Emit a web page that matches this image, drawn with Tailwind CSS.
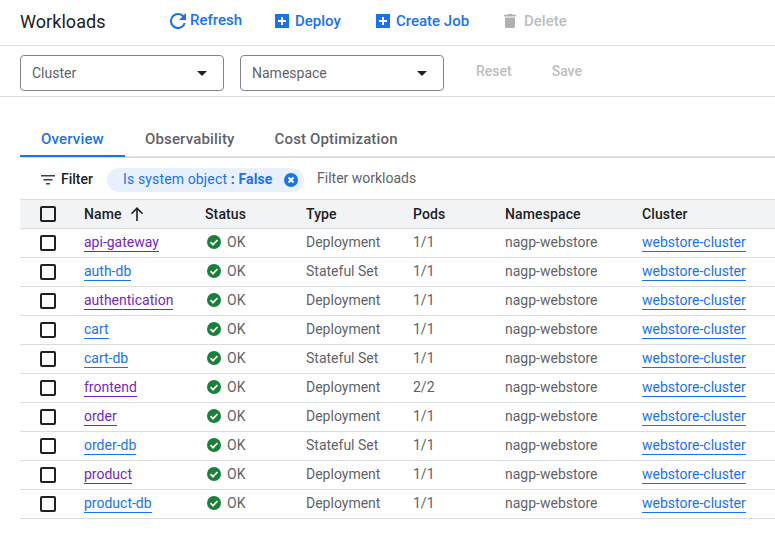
<!DOCTYPE html>
<html lang="en">
<head>
  <meta charset="UTF-8" />
  <title>Workloads</title>
  <script src="https://cdn.jsdelivr.net/npm/@tailwindcss/browser@4"></script>
</head>
<body class="bg-white h-[551px] overflow-hidden font-['Roboto',sans-serif] text-[14px] text-[#202124]">
  <!-- top bar -->
  <header class="h-[46px] flex items-center pl-5 border-b border-[#dadce0]">
    <h1 class="text-[18px] tracking-[0.05px] w-[150px] -mt-[3px]">Workloads</h1>
    <button class="flex items-center gap-1 text-[#1a73e8] font-medium text-[15px] w-[105px] -mt-[5px]">
      <svg class="w-4 h-4 mt-[1px]" viewBox="4 4 16 16" fill="#1a73e8"><path d="M17.650 6.350A7.960 7.960 0 0 0 12 4a8 8 0 1 0 7.730 10h-2.080A6 6 0 1 1 12 6c1.660 0 3.140.69 4.220 1.780L13 11h7V4l-2.350 2.350z"/></svg>
      Refresh
    </button>
    <button class="flex items-center gap-[6px] text-[#1a73e8] font-medium text-[15px] w-[101px] -mt-[3px]">
      <svg class="w-[14px] h-[14px]" viewBox="0 0 14 14"><path fill="#1a73e8" d="M0 0h14v14H0z"/><path fill="#fff" d="M6 3h2v3h3v2H8v3H6V8H3V6h3z"/></svg>
      Deploy
    </button>
    <button class="flex items-center gap-[6px] text-[#1a73e8] font-medium text-[15px] w-[128px] -mt-[3px]">
      <svg class="w-[14px] h-[14px]" viewBox="0 0 14 14"><path fill="#1a73e8" d="M0 0h14v14H0z"/><path fill="#fff" d="M6 3h2v3h3v2H8v3H6V8H3V6h3z"/></svg>
      Create Job
    </button>
    <button class="flex items-center gap-2 text-[#bdbdbd] font-medium text-[15px] -mt-[3px]">
      <svg class="w-3 h-[14px]" viewBox="0 0 12 14" fill="#b0b0b0"><path d="M1 3.500h10V12.500A1.500 1.500 0 0 1 9.500 14h-7A1.500 1.500 0 0 1 1 12.500zM4 0h4l.7.8H12v1.700H0V.8h3.300z"/></svg>
      Delete
    </button>
  </header>

  <!-- filters -->
  <div class="h-[51px] flex items-center pl-5 pt-[4px] border-b border-[#dadce0]">
    <div class="w-[204px] h-[36px] flex items-center justify-between px-[11px] border border-[#80868b] rounded text-[#5f6368]">
      Cluster
      <span class="w-0 h-0 mr-[5px] border-x-[5px] border-x-transparent border-t-[5px] border-t-[#202124]"></span>
    </div>
    <div class="ml-4 w-[204px] h-[36px] flex items-center justify-between px-[11px] border border-[#80868b] rounded text-[#5f6368]">
      Namespace
      <span class="w-0 h-0 mr-[5px] border-x-[5px] border-x-transparent border-t-[5px] border-t-[#202124]"></span>
    </div>
    <span class="ml-[32px] -mt-[3px] text-[#bdbdbd] font-medium">Reset</span>
    <span class="ml-10 -mt-[3px] text-[#bdbdbd] font-medium">Save</span>
  </div>

  <!-- tabs -->
  <nav class="mt-[28px] ml-5 h-[33px] flex border-b-2 border-[#dadce0] font-medium text-[#5f6368] text-[15px] tracking-[0.15px]">
    <a class="w-[105px] h-[32px] flex justify-center pt-[3px] text-[#1a73e8] border-b-2 border-[#1a73e8]">Overview</a>
    <a class="ml-5 pt-[3px]">Observability</a>
    <a class="ml-10 pt-[3px]">Cost Optimization</a>
  </nav>

  <!-- filter bar -->
  <div class="h-[41px] flex items-center pl-5 pt-[2px]">
    <div class="flex items-center w-[87px] pl-[21px] font-medium">
      <svg class="w-[14px] h-[10px] mr-[6px]" viewBox="0 0 14 10" fill="#3c4043"><path d="M0 0h14v1.500H0zM2.500 4h9v1.500h-9zM5 8h4v1.500H5z"/></svg>
      Filter
    </div>
    <div class="w-[197px] h-[24px] flex items-center pl-4 rounded-full bg-[#e8f0fe] text-[#1a73e8] tracking-[0.14px]">
      <span>Is system object <b class="font-bold">: False</b></span>
      <svg class="ml-[11px] w-[14px] h-[14px]" viewBox="0 0 14 14"><circle cx="7" cy="7" r="7" fill="#1a73e8"/><path d="M4.500 4.500l5 5m0-5l-5 5" stroke="#fff" stroke-width="1.800"/></svg>
    </div>
    <span class="ml-[13px] -mt-0.5 text-[#5f6368]">Filter workloads</span>
  </div>

  <!-- table -->
  <table class="ml-5 w-[755px] table-fixed border-collapse text-[#5f6368]">
    <colgroup>
      <col class="w-[64px]" /><col class="w-[121px]" /><col class="w-[101px]" /><col class="w-[107px]" /><col class="w-[92px]" /><col class="w-[137px]" /><col />
    </colgroup>
    <thead>
      <tr class="h-[29px] bg-[#f1f3f4] border-y border-[#dadce0] text-left text-[#202124] tracking-[0.12px]">
        <th class="pl-5"><span class="block w-4 h-4 border-2 border-[#202124] rounded-[2px]"></span></th>
        <th class="font-medium">
          <span class="flex items-center">Name
            <svg class="ml-[8px] w-[14px] h-[14px]" viewBox="0 0 14 14" fill="#202124"><path d="M6.200 14V3.200L2 7.300.9 6.200 7 0l6.100 6.200L12 7.300 7.800 3.200V14z"/></svg>
          </span>
        </th>
        <th class="font-medium">Status</th>
        <th class="font-medium">Type</th>
        <th class="font-medium">Pods</th>
        <th class="font-medium">Namespace</th>
        <th class="font-medium">Cluster</th>
      </tr>
    </thead>
    <tbody>
      <tr class="h-[29px] border-b border-[#dadce0] [&>td+td]:pb-[2px]"><td class="pl-5"><span class="block w-4 h-4 border-2 border-[#202124] rounded-[2px]"></span></td><td><a class="inline-block leading-[17px] text-[#7627bb] border-b border-[#7627bb]">api-gateway</a></td><td><span class="flex items-center gap-[6px] pl-0.5"><svg class="w-[14px] h-[14px]" viewBox="0 0 14 14"><circle cx="7" cy="7" r="7" fill="#188038"/><path d="M3.500 7.200l2.500 2.500 4.500-4.700" stroke="#fff" stroke-width="1.700" fill="none"/></svg>OK</span></td><td>Deployment</td><td>1/1</td><td>nagp-webstore</td><td><a class="inline-block leading-[17px] text-[#1a73e8] border-b border-[#1a73e8]">webstore-cluster</a></td></tr>
      <tr class="h-[29px] border-b border-[#dadce0] [&>td+td]:pb-[2px]"><td class="pl-5"><span class="block w-4 h-4 border-2 border-[#202124] rounded-[2px]"></span></td><td><a class="inline-block leading-[17px] text-[#1a73e8] border-b border-[#1a73e8]">auth-db</a></td><td><span class="flex items-center gap-[6px] pl-0.5"><svg class="w-[14px] h-[14px]" viewBox="0 0 14 14"><circle cx="7" cy="7" r="7" fill="#188038"/><path d="M3.500 7.200l2.500 2.500 4.500-4.700" stroke="#fff" stroke-width="1.700" fill="none"/></svg>OK</span></td><td>Stateful Set</td><td>1/1</td><td>nagp-webstore</td><td><a class="inline-block leading-[17px] text-[#1a73e8] border-b border-[#1a73e8]">webstore-cluster</a></td></tr>
      <tr class="h-[29px] border-b border-[#dadce0] [&>td+td]:pb-[2px]"><td class="pl-5"><span class="block w-4 h-4 border-2 border-[#202124] rounded-[2px]"></span></td><td><a class="inline-block leading-[17px] text-[#7627bb] border-b border-[#7627bb]">authentication</a></td><td><span class="flex items-center gap-[6px] pl-0.5"><svg class="w-[14px] h-[14px]" viewBox="0 0 14 14"><circle cx="7" cy="7" r="7" fill="#188038"/><path d="M3.500 7.200l2.500 2.500 4.500-4.700" stroke="#fff" stroke-width="1.700" fill="none"/></svg>OK</span></td><td>Deployment</td><td>1/1</td><td>nagp-webstore</td><td><a class="inline-block leading-[17px] text-[#1a73e8] border-b border-[#1a73e8]">webstore-cluster</a></td></tr>
      <tr class="h-[29px] border-b border-[#dadce0] [&>td+td]:pb-[2px]"><td class="pl-5"><span class="block w-4 h-4 border-2 border-[#202124] rounded-[2px]"></span></td><td><a class="inline-block leading-[17px] text-[#1a73e8] border-b border-[#1a73e8]">cart</a></td><td><span class="flex items-center gap-[6px] pl-0.5"><svg class="w-[14px] h-[14px]" viewBox="0 0 14 14"><circle cx="7" cy="7" r="7" fill="#188038"/><path d="M3.500 7.200l2.500 2.500 4.500-4.700" stroke="#fff" stroke-width="1.700" fill="none"/></svg>OK</span></td><td>Deployment</td><td>1/1</td><td>nagp-webstore</td><td><a class="inline-block leading-[17px] text-[#1a73e8] border-b border-[#1a73e8]">webstore-cluster</a></td></tr>
      <tr class="h-[29px] border-b border-[#dadce0] [&>td+td]:pb-[2px]"><td class="pl-5"><span class="block w-4 h-4 border-2 border-[#202124] rounded-[2px]"></span></td><td><a class="inline-block leading-[17px] text-[#1a73e8] border-b border-[#1a73e8]">cart-db</a></td><td><span class="flex items-center gap-[6px] pl-0.5"><svg class="w-[14px] h-[14px]" viewBox="0 0 14 14"><circle cx="7" cy="7" r="7" fill="#188038"/><path d="M3.500 7.200l2.500 2.500 4.500-4.700" stroke="#fff" stroke-width="1.700" fill="none"/></svg>OK</span></td><td>Stateful Set</td><td>1/1</td><td>nagp-webstore</td><td><a class="inline-block leading-[17px] text-[#1a73e8] border-b border-[#1a73e8]">webstore-cluster</a></td></tr>
      <tr class="h-[29px] border-b border-[#dadce0] [&>td+td]:pb-[2px]"><td class="pl-5"><span class="block w-4 h-4 border-2 border-[#202124] rounded-[2px]"></span></td><td><a class="inline-block leading-[17px] text-[#7627bb] border-b border-[#7627bb]">frontend</a></td><td><span class="flex items-center gap-[6px] pl-0.5"><svg class="w-[14px] h-[14px]" viewBox="0 0 14 14"><circle cx="7" cy="7" r="7" fill="#188038"/><path d="M3.500 7.200l2.500 2.500 4.500-4.700" stroke="#fff" stroke-width="1.700" fill="none"/></svg>OK</span></td><td>Deployment</td><td>2/2</td><td>nagp-webstore</td><td><a class="inline-block leading-[17px] text-[#1a73e8] border-b border-[#1a73e8]">webstore-cluster</a></td></tr>
      <tr class="h-[29px] border-b border-[#dadce0] [&>td+td]:pb-[2px]"><td class="pl-5"><span class="block w-4 h-4 border-2 border-[#202124] rounded-[2px]"></span></td><td><a class="inline-block leading-[17px] text-[#7627bb] border-b border-[#7627bb]">order</a></td><td><span class="flex items-center gap-[6px] pl-0.5"><svg class="w-[14px] h-[14px]" viewBox="0 0 14 14"><circle cx="7" cy="7" r="7" fill="#188038"/><path d="M3.500 7.200l2.500 2.500 4.500-4.700" stroke="#fff" stroke-width="1.700" fill="none"/></svg>OK</span></td><td>Deployment</td><td>1/1</td><td>nagp-webstore</td><td><a class="inline-block leading-[17px] text-[#1a73e8] border-b border-[#1a73e8]">webstore-cluster</a></td></tr>
      <tr class="h-[29px] border-b border-[#dadce0] [&>td+td]:pb-[2px]"><td class="pl-5"><span class="block w-4 h-4 border-2 border-[#202124] rounded-[2px]"></span></td><td><a class="inline-block leading-[17px] text-[#1a73e8] border-b border-[#1a73e8]">order-db</a></td><td><span class="flex items-center gap-[6px] pl-0.5"><svg class="w-[14px] h-[14px]" viewBox="0 0 14 14"><circle cx="7" cy="7" r="7" fill="#188038"/><path d="M3.500 7.200l2.500 2.500 4.500-4.700" stroke="#fff" stroke-width="1.700" fill="none"/></svg>OK</span></td><td>Stateful Set</td><td>1/1</td><td>nagp-webstore</td><td><a class="inline-block leading-[17px] text-[#1a73e8] border-b border-[#1a73e8]">webstore-cluster</a></td></tr>
      <tr class="h-[29px] border-b border-[#dadce0] [&>td+td]:pb-[2px]"><td class="pl-5"><span class="block w-4 h-4 border-2 border-[#202124] rounded-[2px]"></span></td><td><a class="inline-block leading-[17px] text-[#7627bb] border-b border-[#7627bb]">product</a></td><td><span class="flex items-center gap-[6px] pl-0.5"><svg class="w-[14px] h-[14px]" viewBox="0 0 14 14"><circle cx="7" cy="7" r="7" fill="#188038"/><path d="M3.500 7.200l2.500 2.500 4.500-4.700" stroke="#fff" stroke-width="1.700" fill="none"/></svg>OK</span></td><td>Deployment</td><td>1/1</td><td>nagp-webstore</td><td><a class="inline-block leading-[17px] text-[#1a73e8] border-b border-[#1a73e8]">webstore-cluster</a></td></tr>
      <tr class="h-[29px] border-b border-[#dadce0] [&>td+td]:pb-[2px]"><td class="pl-5"><span class="block w-4 h-4 border-2 border-[#202124] rounded-[2px]"></span></td><td><a class="inline-block leading-[17px] text-[#1a73e8] border-b border-[#1a73e8]">product-db</a></td><td><span class="flex items-center gap-[6px] pl-0.5"><svg class="w-[14px] h-[14px]" viewBox="0 0 14 14"><circle cx="7" cy="7" r="7" fill="#188038"/><path d="M3.500 7.200l2.500 2.500 4.500-4.700" stroke="#fff" stroke-width="1.700" fill="none"/></svg>OK</span></td><td>Deployment</td><td>1/1</td><td>nagp-webstore</td><td><a class="inline-block leading-[17px] text-[#1a73e8] border-b border-[#1a73e8]">webstore-cluster</a></td></tr>
    </tbody>
  </table>
</body>
</html>
